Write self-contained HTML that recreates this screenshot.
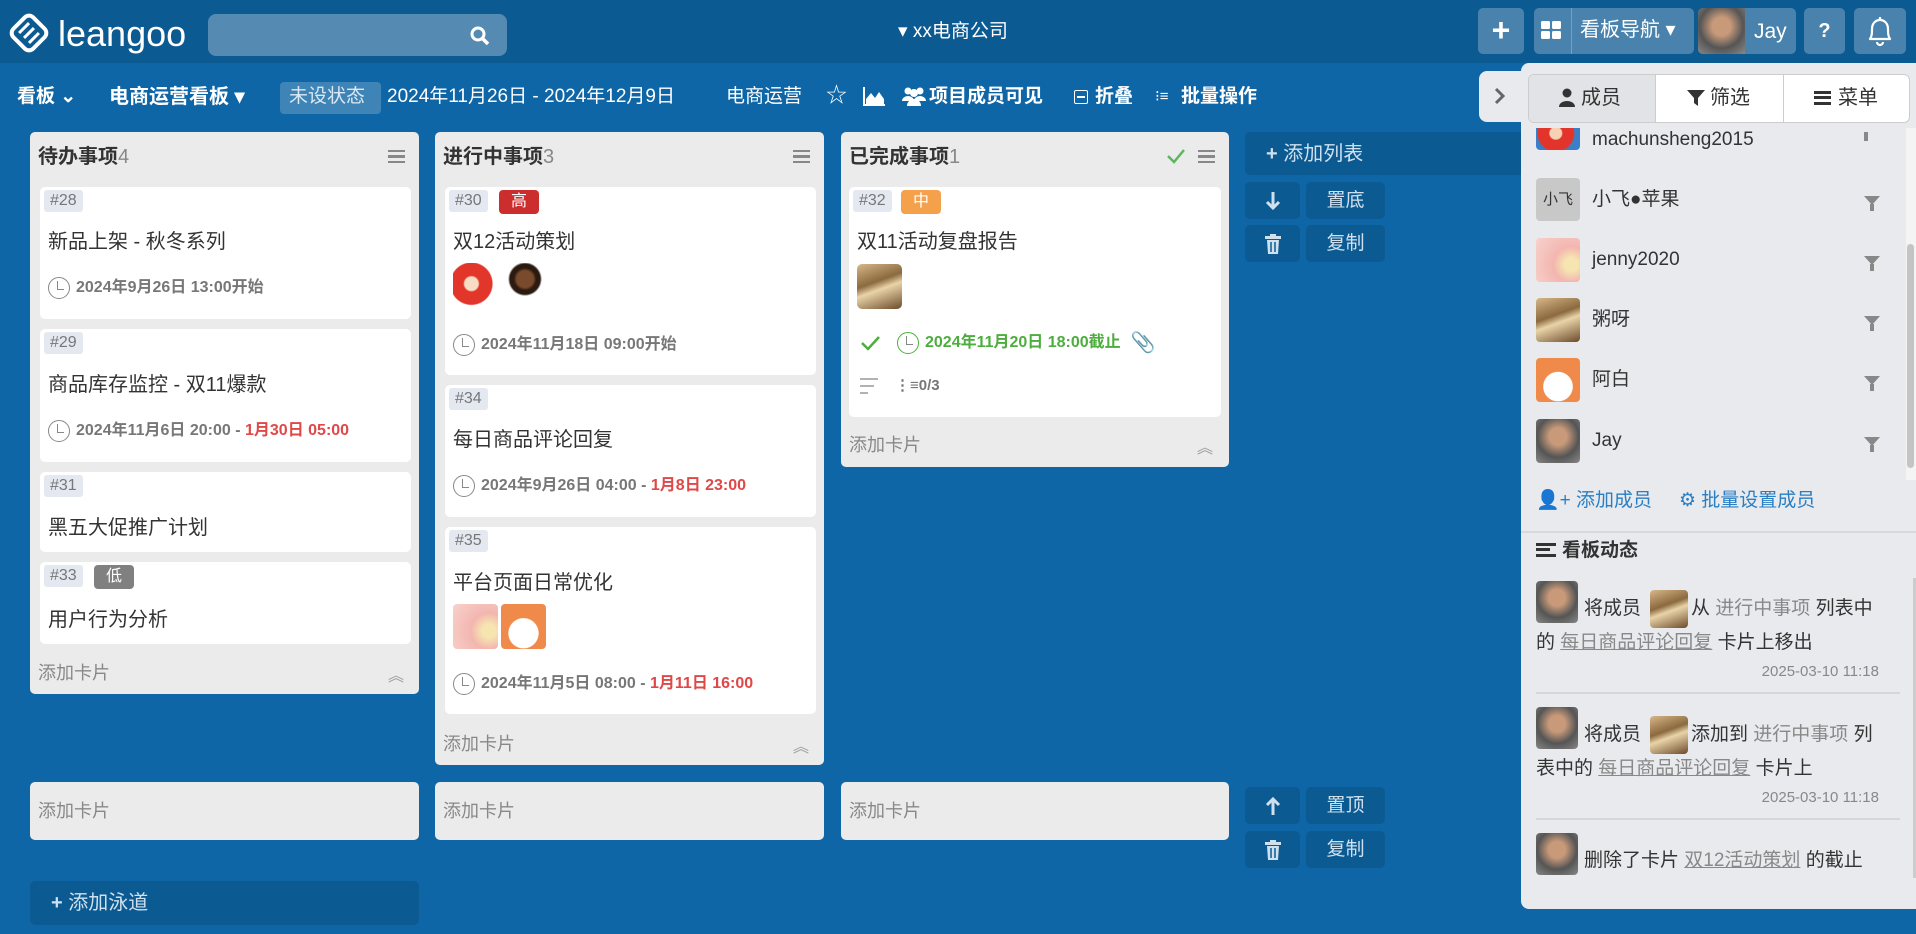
<!DOCTYPE html>
<html><head><meta charset="utf-8"><style>
*{box-sizing:border-box;margin:0;padding:0}
body{width:1916px;height:934px;overflow:hidden;position:relative;background:#0f66a6;font-family:"Liberation Sans","Noto Sans CJK SC",sans-serif;color:#333}
.a{position:absolute}
.t{position:absolute;white-space:nowrap;line-height:24px}
.top{left:0;top:0;width:1916px;height:63px;background:#0c5a92}
.btn{position:absolute;background:rgba(255,255,255,.25);border-radius:5px;color:#fff}
.list{position:absolute;background:#ebebeb;border-radius:5px}
.card{position:absolute;background:#fff;border-radius:5px;left:10px;width:371px}
.bid{position:absolute;left:4px;top:3px;height:22px;line-height:22px;padding:0 6px;background:#e3e8f1;color:#777;font-size:16px;border-radius:3px}
.tag{position:absolute;top:3px;height:24px;line-height:24px;padding:0 12px;color:#fff;font-size:16px;border-radius:4px}
.ttl{position:absolute;left:8px;font-size:20px;color:#333;white-space:nowrap;line-height:26px}
.dt{position:absolute;left:8px;font-size:16px;color:#777;font-weight:bold;white-space:nowrap;line-height:24px;display:flex;align-items:center}
.clk{display:inline-block;width:22px;height:22px;border:1.5px solid #888;border-radius:50%;margin-right:6px;position:relative}
.clk:after{content:"";position:absolute;left:8px;top:3px;width:6px;height:8px;border-left:1.5px solid #888;border-bottom:1.5px solid #888}
.red{color:#e04848}
.ham{position:absolute;width:17px;height:13px;border-top:2.5px solid #888;border-bottom:2.5px solid #888}
.ham:after{content:"";position:absolute;left:0;top:3px;width:17px;height:2.5px;background:#888}
.add{position:absolute;left:8px;font-size:18px;color:#888}
.chev{position:absolute;color:#999;font-size:16px}
.dbtn{position:absolute;background:#0c5a92;border-radius:5px;color:#cfe0ee;font-size:19px;text-align:center}
.av{position:absolute;border-radius:4px;overflow:hidden}
.cat{background:linear-gradient(160deg,#d8b88a 0%,#8a6a3e 40%,#e9d3a8 55%,#6b4a2a 100%)}
.man{background:radial-gradient(circle at 50% 40%,#c99a7a 0 25%,#555 60%,#888 100%)}
.flower{background:radial-gradient(circle at 80% 60%,#f6e5b0 0 15%,#f3b6b0 40%,#f8d2cc 100%)}
.dog{background:radial-gradient(circle at 50% 65%,#fff 0 40%,#f08a4b 42%)}
.fox{background:radial-gradient(circle at 45% 45%,#f6d1b3 0 20%,#e3342c 24%,#fff 60%)}
.ppl{position:absolute;font-size:19px;color:#333;white-space:nowrap;line-height:24px}
.filt{position:absolute;left:1864px;width:0;height:0;border-left:8px solid transparent;border-right:8px solid transparent;border-top:9px solid #888}
.filt:after{content:"";position:absolute;left:-2px;top:-1px;width:4px;height:7px;background:#888}
.act{position:absolute;left:1536px;width:360px;font-size:19px;line-height:34px;color:#333}
.lk{color:#888}
.ul{color:#888;text-decoration:underline}
.tm{position:absolute;left:1536px;width:343px;text-align:right;font-size:15px;color:#888}
.sep{position:absolute;left:1536px;width:364px;height:2px;background:#d4d6da}
</style></head><body>
<div class="a top"></div>
<svg class="a" style="left:9px;top:12px" width="40" height="42" viewBox="0 0 40 42"><g transform="rotate(45 20 21)"><rect x="6" y="7" width="28" height="28" rx="6" fill="none" stroke="#fff" stroke-width="4"/><line x1="13" y1="14" x2="13" y2="28" stroke="#fff" stroke-width="3"/><line x1="20" y1="14" x2="20" y2="28" stroke="#fff" stroke-width="3"/><line x1="27" y1="14" x2="27" y2="28" stroke="#fff" stroke-width="3"/></g></svg>
<div class="t" style="left:58px;top:14px;font-size:36px;line-height:40px;color:#fff">leangoo</div>
<div class="a" style="left:208px;top:14px;width:299px;height:42px;background:rgba(255,255,255,.3);border-radius:8px"></div>
<svg class="a" style="left:469px;top:25px" width="22" height="22" viewBox="0 0 22 22"><circle cx="9" cy="9" r="6" fill="none" stroke="#fff" stroke-width="3"/><line x1="13" y1="13" x2="19" y2="19" stroke="#fff" stroke-width="3.5"/></svg>
<div class="t" style="left:898px;top:20px;font-size:19px;color:#fff">▾ xx电商公司</div>
<div class="btn" style="left:1478px;top:8px;width:46px;height:46px;text-align:center;font-size:32px;line-height:44px;font-weight:bold">+</div>
<div class="btn" style="left:1534px;top:8px;width:160px;height:46px"></div>
<div class="a" style="left:1571px;top:8px;width:1px;height:46px;background:rgba(255,255,255,.25)"></div>
<svg class="a" style="left:1541px;top:21px" width="22" height="20"><rect x="0" y="0" width="9" height="8" rx="1.5" fill="#fff"/><rect x="11" y="0" width="9" height="8" rx="1.5" fill="#fff"/><rect x="0" y="10" width="9" height="8" rx="1.5" fill="#fff"/><rect x="11" y="10" width="9" height="8" rx="1.5" fill="#fff"/></svg>
<div class="t" style="left:1580px;top:18px;font-size:20px;color:#fff">看板导航 ▾</div>
<div class="btn" style="left:1698px;top:8px;width:98px;height:46px"></div>
<div class="av man" style="left:1698px;top:8px;width:47px;height:46px;border-radius:5px 0 0 5px"></div>
<div class="t" style="left:1754px;top:20px;font-size:21px;color:#fff">Jay</div>
<div class="btn" style="left:1804px;top:8px;width:41px;height:46px;text-align:center;font-size:20px;line-height:46px;font-weight:bold">?</div>
<div class="btn" style="left:1854px;top:8px;width:52px;height:46px"></div>
<svg class="a" style="left:1866px;top:15px" width="28" height="32" viewBox="0 0 28 32"><path d="M4 24 C6 21 6 18 6 14 C6 8 10 5 14 5 C18 5 22 8 22 14 C22 18 22 21 24 24 Z" fill="none" stroke="#fff" stroke-width="2.2" stroke-linejoin="round"/><path d="M11 27 a3 3 0 0 0 6 0" fill="none" stroke="#fff" stroke-width="2.2"/><line x1="14" y1="2" x2="14" y2="5" stroke="#fff" stroke-width="2.2"/></svg>

<div class="t" style="left:17px;top:85px;font-size:19px;color:#fff;font-weight:bold">看板 ⌄</div>
<div class="t" style="left:109px;top:85px;font-size:20px;color:#fff;font-weight:bold">电商运营看板 ▾</div>
<div class="a" style="left:280px;top:82px;width:101px;height:32px;background:rgba(255,255,255,.2);border-radius:4px"></div>
<div class="t" style="left:289px;top:85px;font-size:19px;color:#dce8f3">未设状态</div>
<div class="t" style="left:387px;top:85px;font-size:19px;color:#fff">2024年11月26日 - 2024年12月9日</div>
<div class="t" style="left:726px;top:85px;font-size:19px;color:#fff">电商运营</div>
<div class="t" style="left:826px;top:84px;font-size:21px;color:#fff">☆</div>
<svg class="a" style="left:862px;top:87px" width="24" height="20"><path d="M2 0 V18 H23" stroke="#fff" stroke-width="2" fill="none"/><path d="M4 17 L4 12 L9 6 L13 11 L17 5 L22 12 L22 17 Z" fill="#fff"/></svg>
<svg class="a" style="left:902px;top:86px" width="24" height="20"><circle cx="6" cy="5" r="3.5" fill="#fff"/><circle cx="18" cy="5" r="3.5" fill="#fff"/><circle cx="12" cy="7" r="4" fill="#fff"/><path d="M0 15 a6 5 0 0 1 12 0z M12 15 a6 5 0 0 1 12 0z" fill="#fff"/><path d="M5 20 a7 7 0 0 1 14 0z" fill="#fff"/></svg>
<div class="t" style="left:929px;top:85px;font-size:19px;color:#fff;font-weight:bold">项目成员可见</div>
<div class="a" style="left:1074px;top:90px;width:14px;height:14px;border:1.5px solid #fff;border-radius:2px"></div>
<div class="a" style="left:1077px;top:96px;width:8px;height:1.5px;background:#fff"></div>
<div class="t" style="left:1095px;top:85px;font-size:19px;color:#fff;font-weight:bold">折叠</div>
<div class="t" style="left:1155px;top:85px;font-size:15px;color:#fff">⁝≡</div>
<div class="t" style="left:1181px;top:85px;font-size:19px;color:#fff;font-weight:bold">批量操作</div>

<div class="list" style="left:30px;top:132px;width:389px;height:562px">
  <div class="t" style="left:8px;top:13px;font-size:20px;font-weight:bold;color:#333">待办事项<span style="font-weight:normal;color:#888">4</span></div>
  <div class="ham" style="left:358px;top:18px"></div>
  <div class="card" style="top:55px;height:132px"><div class="bid">#28</div><div class="ttl" style="top:42px">新品上架 - 秋冬系列</div><div class="dt" style="top:89px"><span class="clk"></span>2024年9月26日 13:00开始</div></div>
  <div class="card" style="top:197px;height:133px"><div class="bid">#29</div><div class="ttl" style="top:43px">商品库存监控 - 双11爆款</div><div class="dt" style="top:90px"><span class="clk"></span>2024年11月6日 20:00 -&nbsp;<span class="red">1月30日 05:00</span></div></div>
  <div class="card" style="top:340px;height:80px"><div class="bid">#31</div><div class="ttl" style="top:43px">黑五大促推广计划</div></div>
  <div class="card" style="top:430px;height:82px"><div class="bid">#33</div><div class="tag" style="left:54px;background:#808080">低</div><div class="ttl" style="top:45px">用户行为分析</div></div>
  <div class="t add" style="top:529px">添加卡片</div>
  <div class="chev" style="left:358px;top:530px">︽</div>
</div>

<div class="list" style="left:435px;top:132px;width:389px;height:633px">
  <div class="t" style="left:8px;top:13px;font-size:20px;font-weight:bold;color:#333">进行中事项<span style="font-weight:normal;color:#888">3</span></div>
  <div class="ham" style="left:358px;top:18px"></div>
  <div class="card" style="top:55px;height:188px"><div class="bid">#30</div><div class="tag" style="left:54px;background:#cc2e2e">高</div><div class="ttl" style="top:42px">双12活动策划</div>
    <div class="av" style="left:8px;top:76px;width:46px;height:46px;border-radius:6px;background:radial-gradient(circle at 40% 45%,#f8dcc4 0 18%,#e2362b 22% 55%,#fff 58%)"></div>
    <div class="av" style="left:57px;top:76px;width:46px;height:46px;background:radial-gradient(circle at 50% 35%,#7a4a2c 0 22%,#2a1a10 30% 40%,#fff 45%)"></div>
    <div class="dt" style="top:146px"><span class="clk"></span>2024年11月18日 09:00开始</div></div>
  <div class="card" style="top:253px;height:132px"><div class="bid">#34</div><div class="ttl" style="top:42px">每日商品评论回复</div><div class="dt" style="top:89px"><span class="clk"></span>2024年9月26日 04:00 -&nbsp;<span class="red">1月8日 23:00</span></div></div>
  <div class="card" style="top:395px;height:187px"><div class="bid">#35</div><div class="ttl" style="top:43px">平台页面日常优化</div>
    <div class="av flower" style="left:8px;top:77px;width:45px;height:45px"></div>
    <div class="av dog" style="left:56px;top:77px;width:45px;height:45px"></div>
    <div class="dt" style="top:145px"><span class="clk"></span>2024年11月5日 08:00 -&nbsp;<span class="red">1月11日 16:00</span></div></div>
  <div class="t add" style="top:600px">添加卡片</div>
  <div class="chev" style="left:358px;top:601px">︽</div>
</div>

<div class="list" style="left:841px;top:132px;width:388px;height:335px">
  <div class="t" style="left:8px;top:13px;font-size:20px;font-weight:bold;color:#333">已完成事项<span style="font-weight:normal;color:#888">1</span></div>
  <svg class="a" style="left:325px;top:15px" width="20" height="18"><path d="M2 9 L8 15 L18 3" stroke="#5cb85c" stroke-width="2.5" fill="none"/></svg>
  <div class="ham" style="left:357px;top:18px"></div>
  <div class="card" style="top:55px;height:230px;width:372px;left:8px"><div class="bid">#32</div><div class="tag" style="left:52px;background:#f5a04a">中</div><div class="ttl" style="top:42px">双11活动复盘报告</div>
    <div class="av cat" style="left:8px;top:77px;width:45px;height:45px;border-radius:5px"></div>
    <div class="dt" style="top:144px;left:10px;color:#4cae3c"><svg width="24" height="20" style="margin-right:14px"><path d="M3 10 L9 16 L20 4" stroke="#4cae3c" stroke-width="2.5" fill="none"/></svg><span class="clk" style="border-color:#4cae3c"></span>2024年11月20日 18:00截止<span style="color:#999;margin-left:10px;font-size:20px">📎</span></div>
    <svg class="a" style="left:11px;top:190px" width="20" height="18"><line x1="0" y1="2" x2="18" y2="2" stroke="#999" stroke-width="1.5"/><line x1="0" y1="9" x2="14" y2="9" stroke="#999" stroke-width="1.5"/><line x1="0" y1="16" x2="8" y2="16" stroke="#999" stroke-width="1.5"/></svg>
    <div class="t" style="left:46px;top:187px;font-size:15px;color:#777;font-weight:bold">⋮≡0/3</div>
  </div>
  <div class="t add" style="top:301px">添加卡片</div>
  <div class="chev" style="left:356px;top:302px">︽</div>
</div>

<div class="a" style="left:1245px;top:132px;width:276px;height:43px;background:#0c5a92;border-radius:5px 0 0 5px"></div>
<div class="t" style="left:1266px;top:142px;font-size:20px;color:#cfe0ee"><b>+</b> 添加列表</div>
<div class="dbtn" style="left:1245px;top:182px;width:55px;height:37px"><svg width="16" height="20" style="margin-top:9px"><path d="M8 1 V17 M2 11 L8 17 L14 11" stroke="#cfe0ee" stroke-width="3" fill="none"/></svg></div>
<div class="dbtn" style="left:1306px;top:182px;width:79px;height:37px;line-height:37px">置底</div>
<div class="dbtn" style="left:1245px;top:225px;width:55px;height:37px"><svg width="16" height="20" style="margin-top:9px"><rect x="0" y="2" width="16" height="3" fill="#cfe0ee"/><rect x="5" y="0" width="6" height="3" fill="#cfe0ee"/><path d="M2 6 H14 L13 20 H3 Z" fill="#cfe0ee"/><path d="M6 8 V18 M10 8 V18" stroke="#0c5a92" stroke-width="1.5"/></svg></div>
<div class="dbtn" style="left:1306px;top:225px;width:79px;height:37px;line-height:37px">复制</div>

<div class="list" style="left:30px;top:782px;width:389px;height:58px"><div class="t add" style="top:17px">添加卡片</div></div>
<div class="list" style="left:435px;top:782px;width:389px;height:58px"><div class="t add" style="top:17px">添加卡片</div></div>
<div class="list" style="left:841px;top:782px;width:388px;height:58px"><div class="t add" style="top:17px">添加卡片</div></div>
<div class="dbtn" style="left:1245px;top:787px;width:55px;height:37px"><svg width="16" height="20" style="margin-top:9px"><path d="M8 19 V3 M2 9 L8 3 L14 9" stroke="#cfe0ee" stroke-width="3" fill="none"/></svg></div>
<div class="dbtn" style="left:1306px;top:787px;width:79px;height:37px;line-height:37px">置顶</div>
<div class="dbtn" style="left:1245px;top:831px;width:55px;height:37px"><svg width="16" height="20" style="margin-top:9px"><rect x="0" y="2" width="16" height="3" fill="#cfe0ee"/><rect x="5" y="0" width="6" height="3" fill="#cfe0ee"/><path d="M2 6 H14 L13 20 H3 Z" fill="#cfe0ee"/><path d="M6 8 V18 M10 8 V18" stroke="#0c5a92" stroke-width="1.5"/></svg></div>
<div class="dbtn" style="left:1306px;top:831px;width:79px;height:37px;line-height:37px">复制</div>
<div class="a" style="left:30px;top:881px;width:389px;height:44px;background:#0c5a92;border-radius:5px"></div>
<div class="t" style="left:51px;top:891px;font-size:20px;color:#cfe0ee"><b>+</b> 添加泳道</div>

<div class="a" style="left:1479px;top:71px;width:50px;height:51px;background:#e8eaee;border-radius:8px 0 0 8px"></div>
<svg class="a" style="left:1494px;top:87px" width="12" height="18"><path d="M2 2 L9 9 L2 16" stroke="#666" stroke-width="3" fill="none"/></svg>
<div class="a" style="left:1521px;top:63px;width:395px;height:846px;background:#e8eaee;border-radius:8px 0 0 8px"></div>
<div class="a" style="left:1528px;top:74px;width:382px;height:49px;background:#fff;border:1px solid #ccc;border-radius:6px;overflow:hidden">
  <div class="a" style="left:0;top:0;width:127px;height:47px;background:#e2e3e6;border-right:1px solid #ccc"></div>
  <div class="a" style="left:254px;top:0;width:1px;height:47px;background:#ccc"></div>
</div>
<svg class="a" style="left:1559px;top:88px" width="16" height="20"><circle cx="8" cy="5" r="4.5" fill="#333"/><path d="M0 19 C0 11 16 11 16 19 Z" fill="#333"/></svg>
<div class="t" style="left:1581px;top:86px;font-size:20px;color:#333">成员</div>
<svg class="a" style="left:1687px;top:90px" width="18" height="16"><path d="M0 0 H18 L11 8 V16 L7 13 V8 Z" fill="#333"/></svg>
<div class="t" style="left:1710px;top:86px;font-size:20px;color:#333">筛选</div>
<div class="a" style="left:1814px;top:91px;width:17px;height:14px;border-top:3px solid #333;border-bottom:3px solid #333"></div><div class="a" style="left:1814px;top:96px;width:17px;height:3px;background:#333"></div>
<div class="t" style="left:1838px;top:86px;font-size:20px;color:#333">菜单</div>

<div class="a" style="left:1521px;top:128px;width:386px;height:352px;overflow:hidden">
  <div class="av" style="left:15px;top:-2px;width:44px;height:24px;border-radius:0 0 4px 4px;background:radial-gradient(circle at 45% 30%,#f6d1b3 0 20%,#e3342c 24% 60%,#3a80c8 65%)"></div>
  <div class="ppl" style="left:71px;top:0px;font-size:19px">machunsheng2015</div>
  <div class="a" style="left:343px;top:4px;width:4px;height:9px;background:#888"></div>
</div>
<div class="av" style="left:1536px;top:178px;width:44px;height:43px;background:#c8c8c8;font-size:15px;line-height:43px;text-align:center;color:#333">小飞</div>
<div class="ppl" style="left:1592px;top:188px">小飞●苹果</div>
<div class="av flower" style="left:1536px;top:238px;width:44px;height:44px"></div>
<div class="ppl" style="left:1592px;top:248px">jenny2020</div>
<div class="av cat" style="left:1536px;top:298px;width:44px;height:44px"></div>
<div class="ppl" style="left:1592px;top:308px">粥呀</div>
<div class="av dog" style="left:1536px;top:358px;width:44px;height:44px"></div>
<div class="ppl" style="left:1592px;top:368px">阿白</div>
<div class="av man" style="left:1536px;top:419px;width:44px;height:44px"></div>
<div class="ppl" style="left:1592px;top:429px">Jay</div>
<div class="filt" style="top:196px"></div>
<div class="filt" style="top:256px"></div>
<div class="filt" style="top:316px"></div>
<div class="filt" style="top:376px"></div>
<div class="filt" style="top:437px"></div>
<div class="a" style="left:1906px;top:128px;width:10px;height:352px;background:#f4f4f4"></div>
<div class="a" style="left:1907px;top:244px;width:7px;height:224px;background:#c4c4c4;border-radius:4px"></div>
<div class="t" style="left:1536px;top:489px;font-size:19px;color:#2a7fc4">👤+ 添加成员</div>
<div class="t" style="left:1679px;top:489px;font-size:19px;color:#2a7fc4">⚙ 批量设置成员</div>
<div class="a" style="left:1521px;top:531px;width:395px;height:2px;background:#d8d9dc"></div>
<div class="a" style="left:1536px;top:543px;width:20px;height:14px;border-top:3px solid #333;border-bottom:3px solid #333"></div><div class="a" style="left:1536px;top:548px;width:14px;height:3px;background:#333"></div>
<div class="t" style="left:1562px;top:539px;font-size:19px;color:#333;font-weight:bold">看板动态</div>

<div class="av man" style="left:1536px;top:581px;width:42px;height:42px"></div>
<div class="av cat" style="left:1650px;top:590px;width:38px;height:38px"></div>
<div class="act" style="top:592px"><span style="margin-left:48px">将成员</span><span style="margin-left:50px">从 <span class="lk">进行中事项</span> 列表中</span><br>的 <span class="ul">每日商品评论回复</span> 卡片上移出</div>
<div class="tm" style="top:663px">2025-03-10 11:18</div>
<div class="sep" style="top:692px"></div>
<div class="av man" style="left:1536px;top:707px;width:42px;height:42px"></div>
<div class="av cat" style="left:1650px;top:716px;width:38px;height:38px"></div>
<div class="act" style="top:718px"><span style="margin-left:48px">将成员</span><span style="margin-left:50px">添加到 <span class="lk">进行中事项</span> 列</span><br>表中的 <span class="ul">每日商品评论回复</span> 卡片上</div>
<div class="tm" style="top:789px">2025-03-10 11:18</div>
<div class="sep" style="top:818px"></div>
<div class="av man" style="left:1536px;top:833px;width:42px;height:42px"></div>
<div class="act" style="top:844px"><span style="margin-left:48px">删除了卡片 <span class="ul">双12活动策划</span> 的截止</span></div>
<div class="a" style="left:1913px;top:578px;width:3px;height:300px;background:#ccc"></div>
</body></html>
